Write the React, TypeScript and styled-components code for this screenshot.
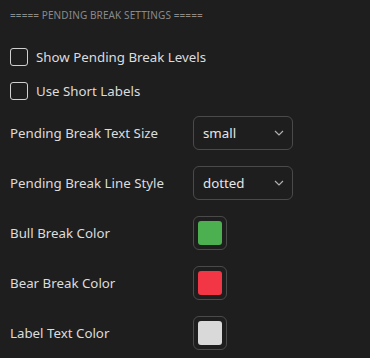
import React from 'react';
import styled, { createGlobalStyle } from 'styled-components';

const GlobalStyle = createGlobalStyle`
  html, body {
    margin: 0;
    padding: 0;
    background-color: #1e1e1e;
  }
  body {
    font-family: "Noto Sans", "DejaVu Sans", sans-serif;
  }
`;

const Panel = styled.div`
  width: 370px;
  height: 358px;
  background-color: #1e1e1e;
  padding: 8px 10px 0 10px;
  box-sizing: border-box;
  color: #dcdcdc;
  overflow: hidden;
`;

const SectionTitle = styled.div`
  font-size: 10px;
  color: #8a8a8a;
  letter-spacing: 0.1px;
  line-height: 14px;
  margin-bottom: 18px;
`;

const CheckRow = styled.label`
  display: flex;
  align-items: center;
  gap: 8px;
  height: 34px;
  font-size: 13.3px;
  cursor: pointer;
`;

const Box = styled.span`
  width: 16px;
  height: 16px;
  border: 1px solid #d0d0d0;
  border-radius: 3px;
  flex-shrink: 0;
`;

const FieldRow = styled.div`
  display: grid;
  grid-template-columns: 183px 100px;
  align-items: center;
  height: 50px;
  font-size: 13.3px;
`;

const SelectBox = styled.div`
  height: 34px;
  box-sizing: border-box;
  border: 1px solid #4a4a4a;
  border-radius: 6px;
  display: flex;
  align-items: center;
  justify-content: space-between;
  padding: 0 8px 0 9px;
  font-size: 13.3px;
  color: #e6e6e6;
`;

const Chevron = () => (
  <svg width="10" height="6" viewBox="0 0 10 6" fill="none">
    <path d="M1 1l4 4 4-4" stroke="#b0b0b0" strokeWidth="1.2" />
  </svg>
);

const SwatchFrame = styled.div`
  width: 34px;
  height: 34px;
  box-sizing: border-box;
  border: 1px solid #4a4a4a;
  border-radius: 6px;
  display: flex;
  align-items: center;
  justify-content: center;
`;

const Swatch = styled.div<{ color: string }>`
  width: 24px;
  height: 24px;
  border-radius: 3px;
  background-color: ${p => p.color};
`;

const selects = [
  { label: 'Pending Break Text Size', value: 'small' },
  { label: 'Pending Break Line Style', value: 'dotted' },
];

const colors = [
  { label: 'Bull Break Color', color: '#4caf50' },
  { label: 'Bear Break Color', color: '#f23645' },
  { label: 'Label Text Color', color: '#d9d9d9' },
];

export default function App() {
  return (
    <>
      <GlobalStyle />
      <Panel>
        <SectionTitle>===== PENDING BREAK SETTINGS =====</SectionTitle>
        <CheckRow>
          <Box />
          Show Pending Break Levels
        </CheckRow>
        <CheckRow>
          <Box />
          Use Short Labels
        </CheckRow>
        {selects.map(s => (
          <FieldRow key={s.label}>
            <span>{s.label}</span>
            <SelectBox>
              {s.value}
              <Chevron />
            </SelectBox>
          </FieldRow>
        ))}
        {colors.map(c => (
          <FieldRow key={c.label}>
            <span>{c.label}</span>
            <SwatchFrame>
              <Swatch color={c.color} />
            </SwatchFrame>
          </FieldRow>
        ))}
      </Panel>
    </>
  );
}
